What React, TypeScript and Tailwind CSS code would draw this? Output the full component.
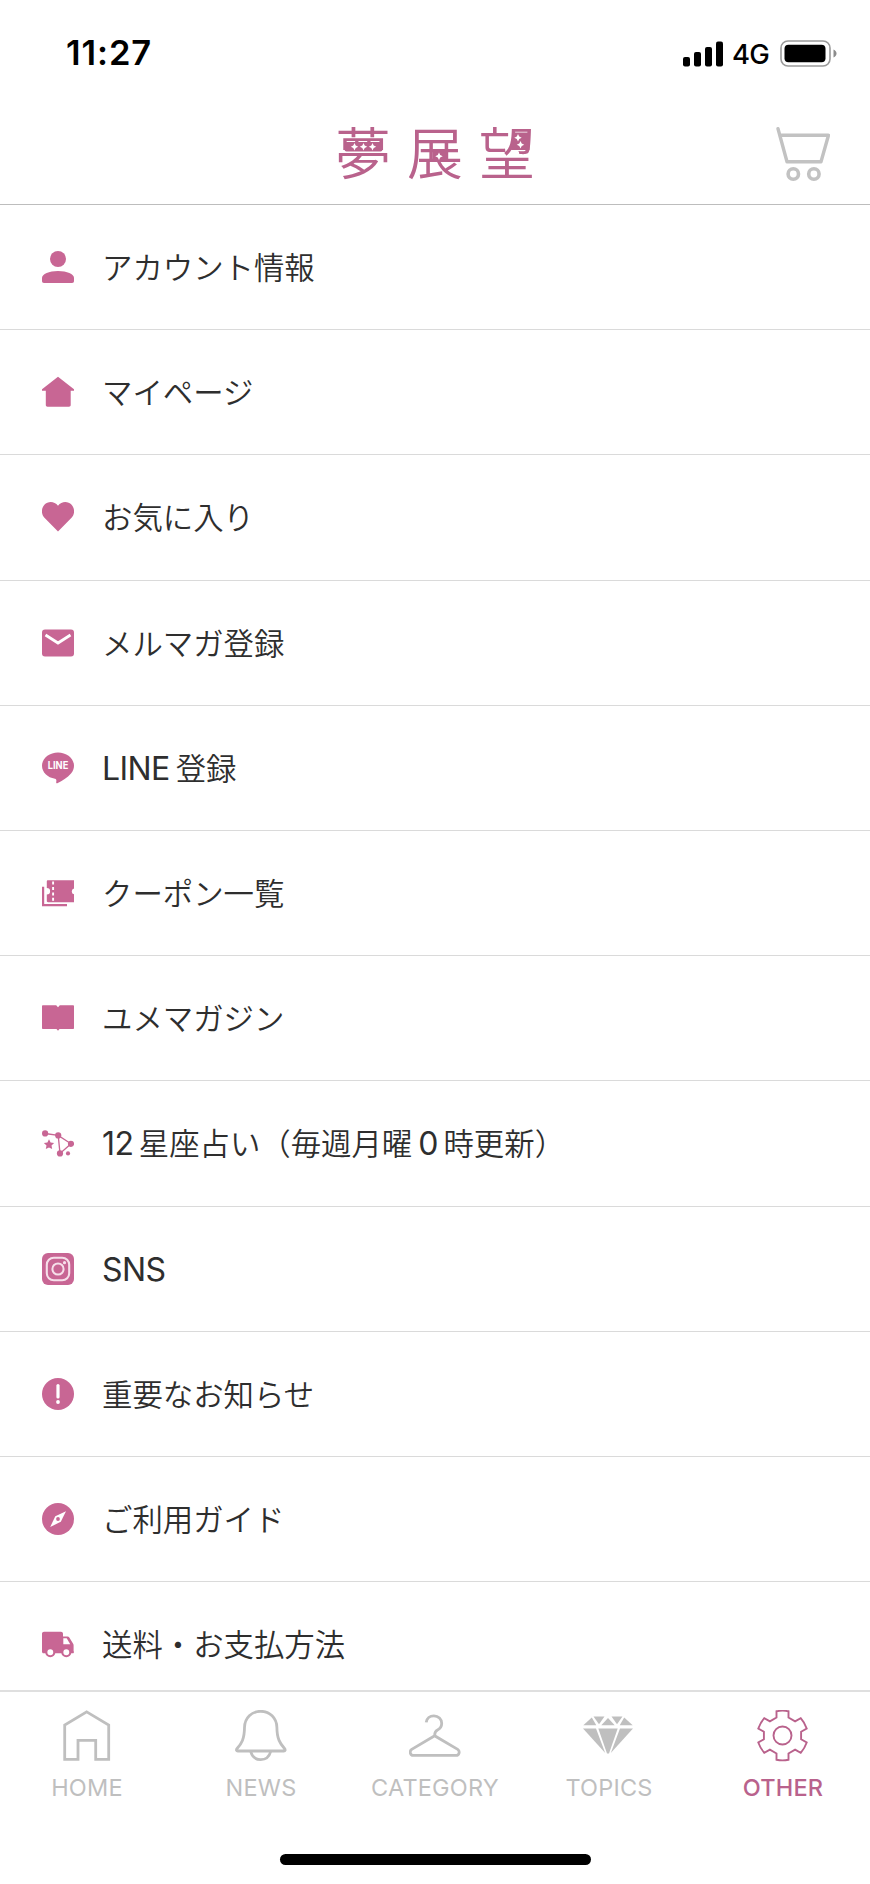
import type { ReactNode } from 'react';

type MenuItem = {
  id: string;
  label: ReactNode;
  icon: ReactNode;
};

type TabItem = {
  label: string;
  icon: ReactNode;
  active?: boolean;
};

const MENU_ITEMS: MenuItem[] = [
  {
    id: 'account',
    label: 'アカウント情報',
    icon: (
      <>
        <circle cx="16" cy="8" r="8" />
        <path d="M0 30v-3c0-4 7-7 16-7s16 3 16 7v3c0 1.300-.7 2-2 2H2c-1.300 0-2-.7-2-2z" />
      </>
    ),
  },
  {
    id: 'mypage',
    label: 'マイページ',
    icon: <path d="M16 .8 32 13.200v1.500h-3.300V29c0 1-.7 1.700-1.700 1.700H5.500c-1 0-1.700-.7-1.700-1.700V14.700H0v-1.500z" />,
  },
  {
    id: 'favorite',
    label: 'お気に入り',
    icon: <path d="M16 30.500 2.700 17.100C-1 13.500-.9 7.500 2.400 3.700 6 0 12.300-.1 16 4.700 19.700-.1 26 0 29.600 3.700 32.900 7.500 33 13.500 29.300 17.100z" />,
  },
  {
    id: 'mail',
    label: 'メルマガ登録',
    icon: (
      <>
        <rect x="0" y="2.600" width="32" height="27" rx="3" />
        <path d="M3.500 8 16 16 28.500 8" fill="none" stroke="#fff" strokeWidth="2.800" />
      </>
    ),
  },
  {
    id: 'line',
    label: <><Latin className="mr-[6px] tracking-[-0.6px]">LINE</Latin>登録</>,
    icon: (
      <>
        <path d="M16 .4C7.200.4 0 6.300 0 13.700c0 6.500 5.500 11.800 13 13 1.600.4 1.500 1.500 1.200 3.500-.1.900.5 1.500 1.600.9C20 29 25.500 25.500 29 21.500c2-2.300 3-5 3-7.800C32 6.300 24.800.4 16 .4z" />
        <text x="5.800" y="17.300" fill="#fff" fontSize="9.800" fontWeight="700" fontFamily="Inter, sans-serif" textLength="20.500" lengthAdjust="spacingAndGlyphs">
          LINE
        </text>
      </>
    ),
  },
  {
    id: 'coupon',
    label: 'クーポン一覧',
    icon: (
      <>
        <path d="M1.100 9.800V28.200H25" fill="none" stroke="currentColor" strokeWidth="2.200" />
        <path d="M6 3.200h26v8.300a3 3 0 0 0 0 5.800v8H6c-.8 0-1.200-.5-1.200-1.200v-6.500a3.300 3.300 0 0 0 0-6.600V4.400c0-.7.4-1.200 1.200-1.200z" />
        <path d="M11.100 4.600v20" fill="none" stroke="#fff" strokeWidth="1.900" strokeDasharray="3 2.400" />
      </>
    ),
  },
  {
    id: 'magazine',
    label: 'ユメマガジン',
    icon: <path d="M.8 3.200h13.400L16 5.200l1.800-2H31.200c.5 0 .8.300.8.800v22.300c0 .5-.3.800-.8.800H17.500L16 28.800l-1.500-1.700H.8c-.5 0-.8-.3-.8-.8V4c0-.5.300-.8.800-.8z" />,
  },
  {
    id: 'horoscope',
    label: (
      <>
        <Latin className="mr-[5px] tracking-[-0.4px]">12</Latin>
        星座占い（毎週月曜
        <Latin className="mx-[6px] tracking-[-1px]">0</Latin>
        時更新）
      </>
    ),
    icon: (
      <>
        <path d="M3 6.500 16.200 8.400 29 16.800 18 26.400 16.200 8.400" fill="none" stroke="currentColor" strokeWidth="1.300" />
        <circle cx="3.100" cy="6.400" r="3.100" />
        <circle cx="16.200" cy="8.400" r="3.100" />
        <circle cx="29" cy="16.800" r="3.100" />
        <circle cx="18" cy="26.400" r="3.100" />
        <circle cx="26" cy="26.400" r="2.100" />
        <path d="M7 12.200l1.600 3.300 3.500.4-2.600 2.500.7 3.700L7 20.400l-3.200 1.700.7-3.700-2.600-2.500 3.500-.4z" />
      </>
    ),
  },
  {
    id: 'sns',
    label: <Latin className="tracking-[-0.6px]">SNS</Latin>,
    icon: (
      <>
        <rect width="32" height="32" rx="6" />
        <g fill="none" stroke="#f6dfea" strokeWidth="2.100">
          <rect x="4.800" y="4.800" width="22.400" height="22.400" rx="7" />
          <circle cx="16" cy="16" r="5.600" strokeWidth="2" />
        </g>
        <circle cx="22.500" cy="9.700" r="1.600" fill="#f6dfea" />
      </>
    ),
  },
  {
    id: 'important',
    label: '重要なお知らせ',
    icon: (
      <>
        <circle cx="16" cy="16" r="16" />
        <path d="M16 7.500v11.500" fill="none" stroke="#fff" strokeWidth="3.200" strokeLinecap="round" />
        <circle cx="16" cy="24" r="1.900" fill="#fff" />
      </>
    ),
  },
  {
    id: 'guide',
    label: 'ご利用ガイド',
    icon: (
      <>
        <circle cx="16" cy="16" r="16" />
        <path d="M24 8.300 18.800 18.800 8.200 24 13.300 13.300z" fill="#fff" />
        <circle cx="16" cy="16" r="1.900" />
      </>
    ),
  },
  {
    id: 'shipping',
    label: '送料・お支払方法',
    icon: (
      <>
        <path d="M2 3.700h17c1.100 0 2 .8 2 2v2.700h4.500c.8 0 1.400.3 1.800 1l3.700 6c.5.700.6 1.300.6 2v5.800c.6.200.4 2-.6 2H1.500c-.9 0-1.500-.6-1.500-1.500V5.600c0-1.100.9-1.900 2-1.900z" />
        <path d="M21.300 10.300h3.400l3.500 5.900h-6.900z" fill="#fff" />
        <g stroke="currentColor" strokeWidth="2.100" fill="#fff">
          <circle cx="8.300" cy="24.200" r="4" />
          <circle cx="24.300" cy="24.200" r="4" />
        </g>
      </>
    ),
  },
];

const TABS: TabItem[] = [
  {
    label: 'HOME',
    icon: <path d="M25.700 1.900 47.700 15v34.400h-13V30.400H17v19H3.700V15z" />,
  },
  {
    label: 'NEWS',
    icon: (
      <>
        <path d="M25.700 1.300C16.700 1.300 9.700 8 9.500 17.500 9.400 29 6.500 33.500 2.300 38.200c-1.500 1.700-.8 2.800.5 2.800h46c1.300 0 2-1.100.5-2.800C45.100 33.500 42 29 41.900 17.500 41.700 8 34.700 1.300 25.700 1.300z" />
        <path d="M15.700 41.500c1.500 5.500 5 8.100 10 8.100s8.500-2.600 10-8.100" />
      </>
    ),
  },
  {
    label: 'CATEGORY',
    icon: (
      <path d="M17.200 12.300c.5-4 3.700-6.500 7.700-6.500 4.500 0 7.800 3.400 7.800 7.500 0 3.300-1.700 5.500-4.200 6.700-2.300 1.100-3 2.300-2.800 5.800L48.700 39.400c2.600 1.800 1.500 6-1.600 6H4.300c-3.100 0-4.200-4.200-1.600-6L25.700 25.800" />
    ),
  },
  {
    label: 'TOPICS',
    icon: (
      <g fill="currentColor" stroke="none">
        <path d="M.3 15.300 8.800 7.500 13.300 15.300z" />
        <path d="M10.500 6.500H21.500L16 14.300z" />
        <path d="M18.300 15.300 25 8l6.700 7.300z" />
        <path d="M28.500 6.500H39.500L34 14.300z" />
        <path d="M36.700 15.300 41.200 7.500 49.700 15.300z" />
        <path d="M0 18.600H13L22.200 43z" />
        <path d="M15.300 18.600H34.700L26 43.500H24z" />
        <path d="M37 18.600H50L27.800 43z" />
      </g>
    ),
  },
  {
    label: 'OTHER',
    active: true,
    icon: (
      <g transform="translate(25.500 25.500)" strokeWidth="1.900">
        <path d="M-6-18V-24.200Q0-25.500 6-24.200V-18L12.600-14.200 18.200-17.300Q22.200-12.800 24.200-7L18.600-3.800V3.800L24.200 7Q22.200 12.800 18.200 17.300L12.600 14.200 6 18V24.200Q0 25.500-6 24.200V18L-12.600 14.200-18.200 17.300Q-22.200 12.800-24.200 7L-18.600 3.800V-3.800L-24.200-7Q-22.200-12.800-18.200-17.300L-12.600-14.200z" />
        <circle r="9" />
      </g>
    ),
  },
];

function Latin({ children, className = '' }: { children: ReactNode; className?: string }) {
  return <span className={`text-[32px] font-normal ${className}`}>{children}</span>;
}

function StatusBar() {
  return (
    <div className="flex h-[107px] items-center justify-between pl-[66px] pr-[33px] text-black">
      <span className="text-[34.500px] font-semibold leading-none tracking-[0.9px]">11:27</span>
      <div className="flex items-center">
        <svg width="40" height="26" viewBox="0 0 40 26" fill="currentColor">
          <rect x="0" y="16" width="7" height="9.500" rx="2" />
          <rect x="11" y="11" width="7" height="14.500" rx="2" />
          <rect x="22" y="6" width="7" height="19.500" rx="2" />
          <rect x="33" y="0.500" width="7" height="25" rx="2" />
        </svg>
        <span className="ml-[9px] mt-[2px] w-[39px] text-[27.500px] font-medium leading-none tracking-[-0.8px]">4G</span>
        <svg className="ml-[9px]" width="57" height="27" viewBox="0 0 57 27">
          <rect x="1" y="1" width="49" height="25" rx="7" fill="none" stroke="#9a9a9a" strokeWidth="1.600" />
          <rect x="4.500" y="4.700" width="41" height="17.500" rx="4" />
          <path d="M53.500 9.500c4 1.500 4 6.500 0 8z" fill="#8c8c8c" />
        </svg>
      </div>
    </div>
  );
}

function Logo() {
  return (
    <div className="relative h-[60px] w-[200px] text-[#b9628c]">
      <span className="whitespace-nowrap text-[56px] font-[350] leading-[61px] tracking-[16px]">夢展望</span>
      {/* Sparkles over the characters */}
      <svg className="absolute left-0 top-0" width="200" height="60" viewBox="0 0 200 60">
        <rect x="9.500" y="18" width="38" height="9.500" rx="2" fill="currentColor" />
        <path d="M178 8.500h16.500V26H176z" fill="currentColor" />
        <rect x="98" y="27.500" width="12" height="10" fill="currentColor" />
        <g fill="#fff">
          <path d="M19.500 19l1.200 2.500 2.500 1.200-2.500 1.200-1.200 2.500-1.200-2.500-2.500-1.200 2.500-1.200z" />
          <path d="M28.500 19l1.200 2.500 2.500 1.200-2.500 1.200-1.200 2.500-1.200-2.500-2.500-1.200 2.500-1.200z" />
          <path d="M37.500 19l1.200 2.500 2.500 1.200-2.500 1.200-1.200 2.500-1.200-2.500-2.500-1.200 2.500-1.200z" />
          <path d="M104 28.500l1.200 2.500 2.500 1.200-2.500 1.200-1.200 2.500-1.200-2.500-2.500-1.200 2.500-1.200z" />
          <path d="M183 10l1.200 2.500 2.500 1.200-2.500 1.200-1.200 2.500-1.200-2.500-2.500-1.200 2.500-1.200z" />
          <path d="M185.500 17l1.200 2.500 2.500 1.200-2.500 1.200-1.200 2.500-1.200-2.500-2.500-1.200 2.500-1.200z" />
        </g>
      </svg>
    </div>
  );
}

function Header() {
  return (
    <header className="flex h-[98px] items-start justify-between border-b border-[#bdbdbd] pl-[335px] pr-[40px] pt-[17px]">
      <Logo />
      <svg className="mt-[2px] text-[#c2c2c2]" width="56" height="58" viewBox="0 0 56 58" fill="none" stroke="currentColor">
        <path d="M4 2.700 13 35.700H47L54.500 9.300H6.500" strokeWidth="3.400" strokeLinecap="round" strokeLinejoin="round" />
        <circle cx="19.300" cy="48" r="5.200" strokeWidth="3.600" />
        <circle cx="39.900" cy="48" r="5.200" strokeWidth="3.600" />
      </svg>
    </header>
  );
}

export default function App() {
  return (
    <div className="flex h-[1884px] w-[870px] flex-col overflow-hidden bg-white font-['Inter','Noto_Sans_CJK_JP',sans-serif]">
      <StatusBar />
      <Header />

      {/* Menu list */}
      <ul className="min-h-0 flex-1 overflow-hidden">
        {MENU_ITEMS.map((item) => (
          <li key={item.id} className="flex h-[125.200px] items-center border-b border-[#dadada] pl-[42px]">
            <svg className="shrink-0 text-[#c86694]" width="32" height="32" viewBox="0 0 32 32" fill="currentColor">
              {item.icon}
            </svg>
            <span className="ml-[28px] mt-[2px] flex items-baseline whitespace-nowrap text-[30.400px] font-[350] leading-[40px] text-[#2e2e2e]">
              {item.label}
            </span>
          </li>
        ))}
      </ul>

      {/* Tab bar */}
      <nav className="grid h-[194px] shrink-0 grid-cols-5 border-t-2 border-[#dfdfdf] pt-[18px]">
        {TABS.map((tab) => (
          <div
            key={tab.label}
            className={`flex flex-col items-center ${tab.active ? 'text-[#b9628c]' : 'text-[#bfbfbf]'}`}
          >
            <svg width="52" height="52" viewBox="0 0 52 52" fill="none" stroke="currentColor" strokeWidth="2.800">
              {tab.icon}
            </svg>
            <span className={`mt-[14px] text-[23.500px] leading-[24px] tracking-[0.2px] ${tab.active ? 'font-medium' : ''}`}>
              {tab.label}
            </span>
          </div>
        ))}
        {/* Home indicator */}
        <div className="col-span-5 mx-auto h-[11.500px] w-[311px] self-end mb-[19px] rounded-full bg-black" />
      </nav>
    </div>
  );
}
